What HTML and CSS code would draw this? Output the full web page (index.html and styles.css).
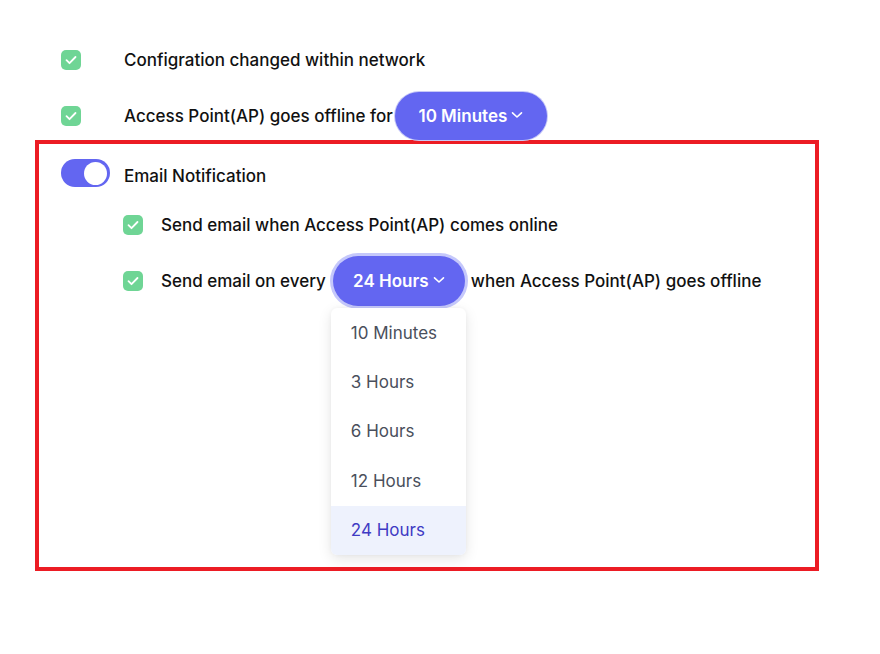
FILE: index.html
```html
<!DOCTYPE html>
<html>
<head>
<meta charset="utf-8">
<link rel="stylesheet" href="styles.css">
</head>
<body>
<div class="page">
  <div class="row row-top1">
    <span class="check"><svg viewBox="0 0 20 20" width="20" height="20"><path d="M5.5 10.2l3 3 6-6.2" fill="none" stroke="#fff" stroke-width="1.8" stroke-linecap="round" stroke-linejoin="round"/></svg></span>
    <span class="label lead">Configration changed within network</span>
  </div>
  <div class="row row-top2">
    <span class="check"><svg viewBox="0 0 20 20" width="20" height="20"><path d="M5.5 10.2l3 3 6-6.2" fill="none" stroke="#fff" stroke-width="1.8" stroke-linecap="round" stroke-linejoin="round"/></svg></span>
    <span class="label lead">Access Point(AP) goes offline for</span>
    <button class="pill pill-a">10 Minutes<svg class="chev" viewBox="0 0 12 8" width="12" height="8"><path d="M1.5 1.8l4.5 4.2 4.5-4.2" fill="none" stroke="#fff" stroke-width="1.6" stroke-linecap="round" stroke-linejoin="round"/></svg></button>
  </div>
  <div class="box">
    <div class="row row-toggle">
      <span class="toggle"><span class="knob"></span></span>
      <span class="label toggle-label">Email Notification</span>
    </div>
    <div class="sub">
      <div class="row row-sub1">
        <span class="check"><svg viewBox="0 0 20 20" width="20" height="20"><path d="M5.5 10.2l3 3 6-6.2" fill="none" stroke="#fff" stroke-width="1.8" stroke-linecap="round" stroke-linejoin="round"/></svg></span>
        <span class="label sublead">Send email when Access Point(AP) comes online</span>
      </div>
      <div class="row row-sub2">
        <span class="check"><svg viewBox="0 0 20 20" width="20" height="20"><path d="M5.5 10.2l3 3 6-6.2" fill="none" stroke="#fff" stroke-width="1.8" stroke-linecap="round" stroke-linejoin="round"/></svg></span>
        <span class="label sublead">Send email on every</span>
        <div class="dd">
          <button class="pill pill-b">24 Hours<svg class="chev" viewBox="0 0 12 8" width="12" height="8"><path d="M1.5 1.8l4.5 4.2 4.5-4.2" fill="none" stroke="#fff" stroke-width="1.6" stroke-linecap="round" stroke-linejoin="round"/></svg></button>
          <ul class="menu">
            <li>10 Minutes</li>
            <li>3 Hours</li>
            <li>6 Hours</li>
            <li>12 Hours</li>
            <li class="sel">24 Hours</li>
          </ul>
        </div>
        <span class="label trail">when Access Point(AP) goes offline</span>
      </div>
    </div>
  </div>
</div>
</body>
</html>
```

FILE: styles.css
```css
* { box-sizing: border-box; }
html, body { margin: 0; padding: 0; background: #fff; }
body {
  font-family: "Inter", "Noto Sans", sans-serif;
  font-size: 17px;
  font-weight: 500;
  color: #111;
  width: 880px;
  height: 654px;
  overflow: hidden;
}
.page { padding-top: 40px; }
.row { display: flex; align-items: center; white-space: nowrap; }
.row > * { flex: none; }
.row-top1 { height: 40px; padding-left: 61px; }
.row-top2 { height: 49px; margin-top: 11px; padding-left: 61px; }
.lead { margin-left: 43px; }
.check {
  width: 20px; height: 20px;
  border-radius: 5px;
  background: #6fd595;
  display: inline-flex;
}
.check svg { display: block; }
.pill {
  font-family: inherit;
  font-size: 17px;
  font-weight: 600;
  color: #fff;
  background: #6366f1;
  border: none;
  border-radius: 999px;
  display: inline-flex;
  align-items: center;
  gap: 4px;
  cursor: pointer;
  padding: 0;
}
.chev { display: block; margin-top: -2px; }
.pill-a {
  margin-left: 2px;
  height: 48px;
  width: 152px;
  box-shadow: 0 0 0 1px #c7c9f7;
  justify-content: center;
}
.box {
  margin-left: 35px;
  width: 784px;
  height: 431px;
  border: 4px solid #ec1c24;
  padding-top: 14px;
}
.row-toggle { height: 30px; padding-left: 22px; }
.toggle-label { margin-left: 14px; margin-top: 5px; }
.toggle {
  width: 49px; height: 28px;
  border-radius: 14px;
  background: #6366f1;
  display: flex;
  align-items: center;
  justify-content: flex-end;
  padding-right: 3px;
}
.knob {
  width: 23px; height: 23px;
  border-radius: 50%;
  background: #fff;
}
.sub { padding-left: 84px; }
.row-sub1 { height: 30px; margin-top: 22px; }
.sublead { margin-left: 18px; }
.row-sub2 { height: 56px; margin-top: 13px; }
.dd { position: relative; margin-left: 7px; }
.pill-b {
  height: 50px;
  width: 132px;
  justify-content: center;
  box-shadow: 0 0 0 3px #c5c8fb;
}
.trail { margin-left: 6px; }
.menu {
  position: absolute;
  top: 52px;
  left: -2px;
  width: 135px;
  margin: 0;
  padding: 0;
  list-style: none;
  background: #fff;
  border-radius: 6px;
  box-shadow: 0 4px 14px rgba(0,0,0,0.10), 0 0 4px rgba(0,0,0,0.04);
  overflow: hidden;
}
.menu li {
  height: 49.4px;
  display: flex;
  align-items: center;
  padding-left: 20px;
  color: #4a4f5c;
  font-weight: 400;
}
.menu li.sel { background: #eef2fd; color: #3f3bc4; }
```
